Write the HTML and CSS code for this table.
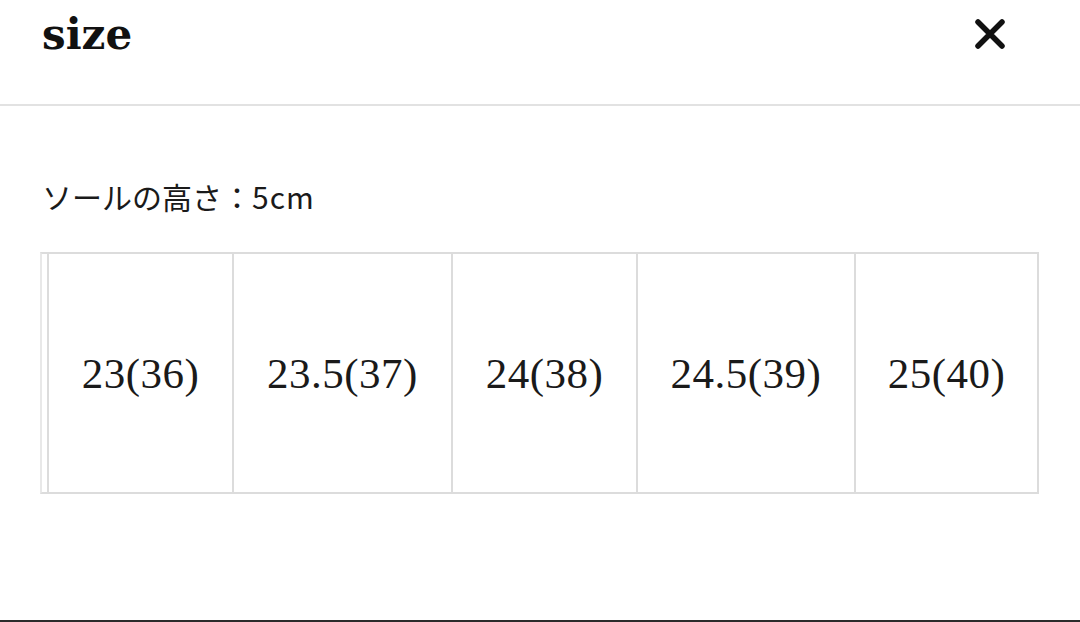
FILE: index.html
```html
<!DOCTYPE html>
<html lang="ja">
<head>
<meta charset="utf-8">
<title>size</title>
<link rel="stylesheet" href="styles.css">
</head>
<body>
<div class="sheet">
  <header class="sheet-header">
    <h1 class="sheet-title">size</h1>
    <button class="close-btn" type="button" aria-label="閉じる">
      <svg width="32" height="32" viewBox="0 0 32 32" aria-hidden="true">
        <path d="M4 4 L28 28 M28 4 L4 28" stroke="#111" stroke-width="5.5" stroke-linecap="round" fill="none"/>
      </svg>
    </button>
  </header>
  <div class="sheet-body">
    <p class="sole-note">ソールの高さ：<span class="sole-value">5cm</span></p>
    <div class="size-table">
      <div class="size-cell c1">23(36)</div>
      <div class="size-cell c2">23.5(37)</div>
      <div class="size-cell c3">24(38)</div>
      <div class="size-cell c4">24.5(39)</div>
      <div class="size-cell c5">25(40)</div>
    </div>
  </div>
</div>
</body>
</html>
```
FILE: styles.css
```css
html, body {
  margin: 0;
  padding: 0;
  background: #fff;
}
body {
  width: 1080px;
  height: 622px;
  overflow: hidden;
}
.sheet {
  height: 622px;
  box-sizing: border-box;
  border-bottom: 2px solid #2b2b2b;
  display: flex;
  flex-direction: column;
}
.sheet-header {
  height: 106px;
  box-sizing: border-box;
  border-bottom: 2px solid #e2e2e2;
  display: flex;
  justify-content: space-between;
  align-items: flex-start;
  padding: 8px 66px 0 42px;
}
.sheet-title {
  margin: 2px 0 0;
  font-family: "DejaVu Serif", "Liberation Serif", serif;
  font-weight: 700;
  font-size: 42px;
  line-height: 50px;
  color: #111;
}
.close-btn {
  width: 48px;
  height: 48px;
  margin-top: 2px;
  padding: 0;
  border: 0;
  background: none;
  display: flex;
  align-items: center;
  justify-content: center;
}
.sheet-body {
  padding: 70px 0 0 40px;
}
.sole-note {
  margin: 0 0 0 2px;
  font-family: "Noto Sans CJK JP", "Noto Sans", sans-serif;
  font-size: 30px;
  line-height: 40px;
  color: #1a1a1a;
}
.sole-value {
  letter-spacing: 1px;
}
.size-table {
  margin-top: 36px;
  display: grid;
  grid-template-columns: 185px 219px 185px 218px 185px;
  width: max-content;
  border-top: 2px solid #dcdcdc;
  border-bottom: 2px solid #dcdcdc;
  border-left: 2px solid #e8e8e8;
  padding-left: 5px;
}
.size-cell {
  height: 238px;
  border-left: 2px solid #dcdcdc;
  display: flex;
  align-items: center;
  justify-content: center;
  font-family: "Liberation Serif", serif;
  font-size: 43px;
  letter-spacing: 0.5px;
  color: #1a1a1a;
}
.size-cell.c5 {
  border-right: 2px solid #dcdcdc;
}
```
